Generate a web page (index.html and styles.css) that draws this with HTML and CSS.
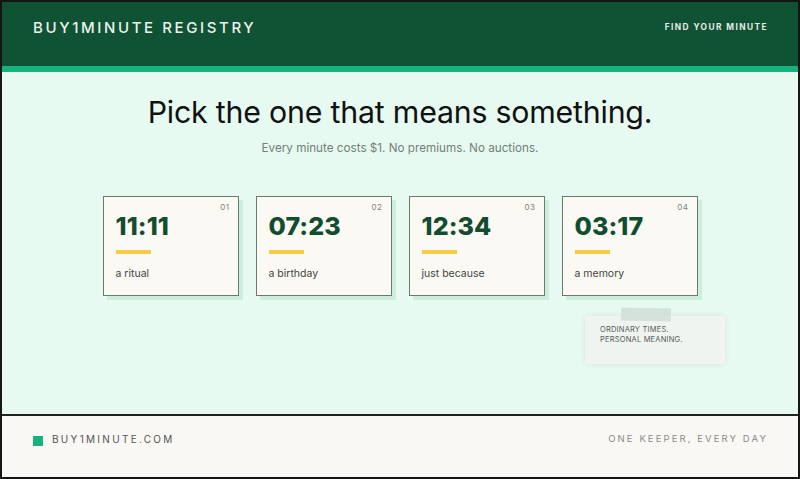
FILE: index.html
```html
<!DOCTYPE html>
<html lang="en">
<head>
<meta charset="utf-8">
<title>Buy1Minute Registry</title>
<link rel="stylesheet" href="styles.css">
</head>
<body>
<div class="frame">
  <header class="topbar">
    <div class="brand">BUY1MINUTE REGISTRY</div>
    <div class="cta">FIND YOUR MINUTE</div>
  </header>
  <main class="main">
    <h1 class="title">Pick the one that means something.</h1>
    <p class="subtitle">Every minute costs $1. No premiums. No auctions.</p>
    <div class="cards">
      <div class="card">
        <div class="num">01</div>
        <div class="time">11:11</div>
        <div class="bar"></div>
        <div class="label">a ritual</div>
      </div>
      <div class="card">
        <div class="num">02</div>
        <div class="time">07:23</div>
        <div class="bar"></div>
        <div class="label">a birthday</div>
      </div>
      <div class="card">
        <div class="num">03</div>
        <div class="time">12:34</div>
        <div class="bar"></div>
        <div class="label">just because</div>
      </div>
      <div class="card">
        <div class="num">04</div>
        <div class="time">03:17</div>
        <div class="bar"></div>
        <div class="label">a memory</div>
      </div>
    </div>
    <div class="note-row">
      <div class="note">
        <span class="tape"></span>
        <div class="note-text">ORDINARY TIMES.<br>PERSONAL MEANING.</div>
      </div>
    </div>
  </main>
  <footer class="footer">
    <div class="foot-brand"><span class="dot"></span><span class="foot-name">BUY1MINUTE.COM</span></div>
    <div class="foot-tag">ONE KEEPER, EVERY DAY</div>
  </footer>
</div>
</body>
</html>
```

FILE: styles.css
```css
* { box-sizing: border-box; }
html, body { margin: 0; padding: 0; }
body {
  font-family: Inter, "Noto Sans", "Liberation Sans", sans-serif;
  background: #111;
}
.frame {
  width: 800px;
  height: 479px;
  border: 2px solid #151515;
  display: flex;
  flex-direction: column;
  background: #e7faf1;
  overflow: hidden;
}
.topbar {
  height: 70px;
  flex: none;
  background: #105234;
  border-bottom: 6px solid #18b27f;
  display: flex;
  justify-content: space-between;
  align-items: flex-start;
  padding: 17px 30px 0 31px;
}
.brand {
  color: #ecf2ee;
  font-size: 15px;
  font-weight: 500;
  letter-spacing: 2.6px;
  line-height: 18px;
}
.cta {
  color: #e6ece8;
  font-size: 8.3px;
  font-weight: 700;
  letter-spacing: 1.45px;
  line-height: 12px;
  padding-top: 2px;
}
.main {
  flex: 1;
  display: flex;
  flex-direction: column;
  align-items: center;
  padding-top: 21px;
}
.title {
  margin: 0;
  font-size: 30.3px;
  font-weight: 400;
  line-height: 38px;
  color: #111;
  letter-spacing: -0.2px;
}
.subtitle {
  margin: 9px 0 0;
  font-size: 11.7px;
  line-height: 16px;
  color: #738079;
}
.cards {
  display: flex;
  gap: 17px;
  margin-top: 40px;
}
.card {
  width: 136px;
  height: 100px;
  background: #fbf9f4;
  border: 1px solid #6a7a71;
  box-shadow: 4px 4px 0 #cdeedd;
  padding: 5px 8px 0 12px;
  display: flex;
  flex-direction: column;
}
.num {
  text-align: right;
  font-size: 8px;
  line-height: 10px;
  color: #7c827e;
  letter-spacing: 0.5px;
}
.time {
  margin-top: 2px;
  font-size: 25px;
  line-height: 25px;
  font-weight: 800;
  color: #124d30;
  letter-spacing: 0.1px;
}
.bar {
  width: 35px;
  height: 4px;
  margin-top: 11px;
  background: #f6cd45;
}
.label {
  margin-top: 13px;
  font-size: 10.5px;
  line-height: 14px;
  color: #3f4542;
}
.note-row {
  width: 650px;
  display: flex;
  justify-content: flex-end;
  margin-top: 20px;
}
.note {
  position: relative;
  width: 140px;
  height: 48px;
  background: #eff4f0;
  box-shadow: 0 0 6px rgba(200, 215, 205, 0.6);
  padding: 9px 15px;
}
.tape {
  position: absolute;
  left: 36px;
  top: -8px;
  width: 50px;
  height: 13px;
  background: rgba(206, 220, 212, 0.8);
  transform: rotate(1deg);
}
.note-text {
  font-size: 7.5px;
  line-height: 10px;
  color: #555b57;
  letter-spacing: 0.2px;
}
.footer {
  height: 63px;
  flex: none;
  background: #f9f8f4;
  border-top: 2px solid #222;
  display: flex;
  justify-content: space-between;
  align-items: flex-start;
  padding: 16px 30px 0 31px;
}
.foot-brand {
  display: flex;
  align-items: center;
  gap: 9px;
}
.dot {
  width: 10px;
  height: 10px;
  background: #18b27f;
  margin-top: 3px;
}
.foot-name {
  font-size: 10px;
  line-height: 14px;
  letter-spacing: 2.3px;
  color: #555;
}
.foot-tag {
  font-size: 9.5px;
  line-height: 14px;
  letter-spacing: 2.1px;
  color: #8a8a8a;
}
```
